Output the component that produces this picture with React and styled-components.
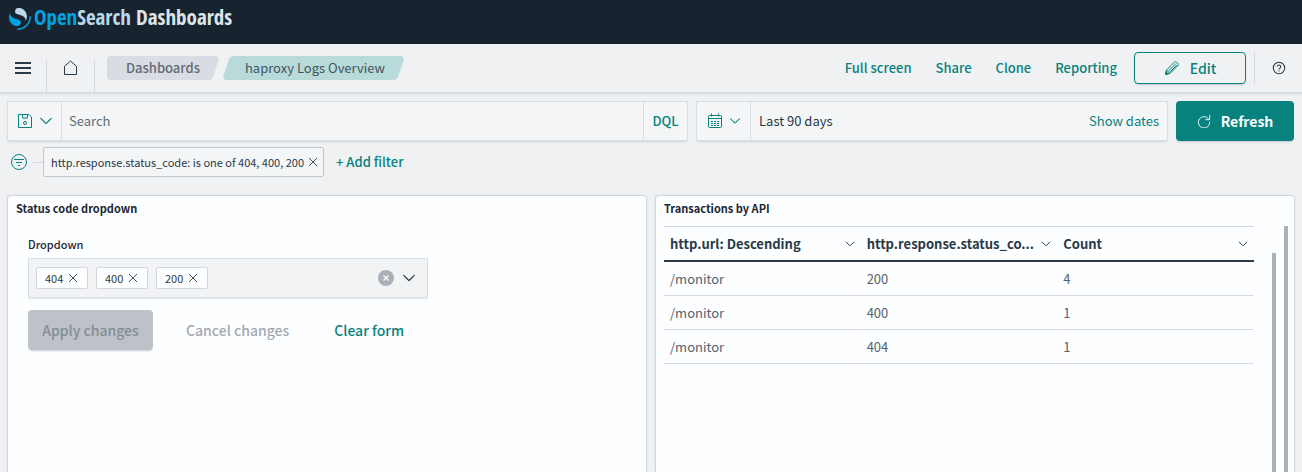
import React from "react";
import styled, { createGlobalStyle, css } from "styled-components";

const teal = "#07827e";
const ink = "#2a3947";
const border = "#d3d7dd";
const panelColor = "#fdfeff";

const GlobalStyle = createGlobalStyle`
  *, *::before, *::after { box-sizing: border-box; }
  body {
    margin: 0;
    background: #f0f1f3;
    color: ${ink};
    font-family: "Noto Sans CJK SC", "Noto Sans", sans-serif;
    font-size: 13px;
    line-height: 20px;
  }
  button, input { font: inherit; color: inherit; margin: 0; }
  a { text-decoration: none; }
  svg { flex: none; }
`;

const Page = styled.div`
  display: flex;
  flex-direction: column;
  height: 100vh;
  overflow: hidden;
`;

const TopBar = styled.header`
  display: flex;
  align-items: flex-start;
  height: 44px;
  padding: 4px 9px;
  background: #172430;
  flex: none;
`;

const Brand = styled.a`
  display: flex;
  align-items: flex-end;
  gap: 3px;
`;

const Wordmark = styled.span`
  font-family: "Open Sans Condensed", "Noto Sans Condensed", "Liberation Sans Narrow", "Open Sans", sans-serif;
  font-weight: 700;
  font-size: 21px;
  line-height: 26px;
  color: #dfe5e6;
  white-space: nowrap;
`;

const BrandPart = styled.span`
  color: ${(p) => (p.$light ? "#b9d9eb" : "#00a3e0")};
`;

const NavBar = styled.nav`
  display: flex;
  align-items: center;
  height: 49px;
  flex: none;
  border-bottom: 1px solid ${border};
  box-shadow: 0 1px 3px rgba(100, 110, 130, 0.2);
`;

const IconButton = styled.button`
  display: flex;
  align-items: center;
  justify-content: center;
  width: ${(p) => p.$width || 47}px;
  height: 32px;
  padding: 0;
  border: 0;
  background: none;
  color: ${(p) => (p.$accent ? teal : ink)};
`;

const Divider = styled.span`
  align-self: flex-end;
  width: 1px;
  height: 32px;
  background: ${border};
`;

const Crumbs = styled.div`
  display: flex;
  gap: 10px;
  margin-left: 12px;
`;

const Crumb = styled.a`
  position: relative;
  isolation: isolate;
  height: 24px;
  padding: 0 16px 0 19px;
  line-height: 24px;
  font-weight: ${(p) => (p.$current ? 400 : 500)};
  color: ${(p) => (p.$current ? "#3f5560" : "#5f6b76")};
  white-space: nowrap;

  &::before {
    content: "";
    position: absolute;
    inset: 0;
    z-index: -1;
    border-radius: 4px;
    background: ${(p) => (p.$current ? "#b8dbda" : "#d9dce2")};
    transform: skewX(-18deg);
  }

  ${(p) =>
    !p.$current &&
    css`
      &::after {
        content: "";
        position: absolute;
        inset: 0 50% 0 0;
        z-index: -1;
        border-radius: 4px 0 0 4px;
        background: #d9dce2;
      }
      &::before {
        left: 20%;
      }
    `}
`;

const NavActions = styled.div`
  display: flex;
  align-items: center;
  margin-left: auto;
`;

const TextButton = styled.button`
  height: ${(p) => (p.$large ? 40 : 30)}px;
  padding: 0 12px;
  border: 0;
  background: none;
  color: ${teal};
  font-weight: 500;
  font-size: ${(p) => (p.$large ? 14 : 13)}px;
  white-space: nowrap;

  &:disabled { color: #a3a9b0; }
`;

const SolidButton = styled.button`
  display: flex;
  align-items: center;
  justify-content: center;
  gap: 10px;
  height: ${(p) => (p.$outline ? 32 : 40)}px;
  width: ${(p) => p.$width}px;
  padding: 0;
  border: ${(p) => (p.$outline ? `1px solid ${teal}` : "0")};
  border-radius: 4px;
  background: ${(p) => (p.$outline ? "none" : teal)};
  color: ${(p) => (p.$outline ? teal : "#ffffff")};
  font-weight: ${(p) => (p.$strong ? 700 : 500)};
  font-size: 14px;
  white-space: nowrap;
  box-shadow: 0 2px 2px -1px rgba(80, 90, 100, 0.3);

  &:disabled { background: #bdc2c9; color: #858c93; }
`;

const EditButton = styled(SolidButton)`
  margin: 0 8px 0 5px;
`;

const QueryRow = styled.div`
  display: flex;
  gap: 8px;
  padding: 8px 8px 0 7px;
`;

const Group = styled.div`
  display: flex;
  height: 40px;
  border: 1px solid #d8dfe2;
  background: #f3f5f6;
  box-shadow: 0 2px 2px -1px rgba(80, 90, 110, 0.2);
  flex: ${(p) => (p.$grow ? "1" : "0 1 472px")};
  min-width: 0;
`;

const GroupButton = styled.button`
  display: flex;
  align-items: center;
  justify-content: center;
  gap: 6px;
  flex: none;
  width: ${(p) => p.$width}px;
  padding: 0;
  border: 0 solid #d8dfe2;
  border-right-width: ${(p) => (p.$end ? 0 : 1)}px;
  border-left-width: ${(p) => (p.$end ? 1 : 0)}px;
  background: none;
  color: ${teal};
  font-weight: 500;
`;

const SearchInput = styled.input`
  flex: 1;
  min-width: 0;
  padding: 0 7px;
  border: 0;
  outline: 0;
  background: none;

  &::placeholder { color: #5f6b76; opacity: 1; }
`;

const DateValue = styled.button`
  flex: 1;
  padding: 0 8px;
  border: 0;
  background: none;
  text-align: left;
`;

const ShowDates = styled.button`
  padding: 0 8px;
  border: 0;
  background: none;
  color: ${teal};
`;

const FilterRow = styled.div`
  display: flex;
  align-items: center;
  height: 36px;
  flex: none;
  padding: 6px 8px 0;
`;

const FilterLine = styled.span`
  width: 10px;
  height: 1px;
  margin-left: 3px;
  background: ${border};
`;

const FilterPill = styled.div`
  display: flex;
  align-items: center;
  gap: 4px;
  height: 30px;
  padding: 0 5px 0 7px;
  border: 1px solid #c3c7cd;
  border-radius: 2px;
  background: #f4f5f6;
  font-size: 11px;
  white-space: nowrap;
`;

const PillRemove = styled.button`
  display: flex;
  padding: 0;
  border: 0;
  background: none;
`;

const Panels = styled.main`
  display: grid;
  grid-template-columns: 1fr 1fr;
  gap: 8px;
  flex: 1;
  min-height: 0;
  padding: 18px 7px 0;
`;

const Panel = styled.section`
  display: flex;
  flex-direction: column;
  min-width: 0;
  border: 1px solid ${border};
  border-bottom: 0;
  border-radius: 4px 4px 0 0;
  background: ${panelColor};
  box-shadow: 0 0 2px rgba(80, 90, 110, 0.15);
`;

const PanelTitle = styled.h2`
  margin: 0;
  padding: 2px 8px 0;
  font-size: 11px;
  line-height: 20px;
  font-weight: 700;
  color: #1b2733;
`;

const ControlForm = styled.form`
  padding: 16px 20px;
`;

const FieldLabel = styled.label`
  display: block;
  margin-bottom: 4px;
  font-size: 11px;
  line-height: 20px;
  font-weight: 500;
  color: #1b2733;
`;

const ComboBox = styled.div`
  display: flex;
  align-items: center;
  gap: 8px;
  max-width: 400px;
  height: 40px;
  padding: 0 11px 0 7px;
  border: 1px solid #d8dfe2;
  background: #f2f3f5;
  box-shadow: 0 2px 2px -1px rgba(80, 90, 110, 0.15);
`;

const Chip = styled.span`
  display: flex;
  align-items: center;
  gap: 5px;
  width: 52px;
  height: 22px;
  padding: 0 8px;
  border: 1px solid ${border};
  border-radius: 2px;
  background: ${panelColor};
  font-size: 11px;
`;

const ComboInput = styled.input`
  flex: 1;
  min-width: 0;
  padding: 0;
  border: 0;
  outline: 0;
  background: none;
`;

const FormActions = styled.div`
  display: flex;
  gap: 21px;
  margin-top: 12px;
`;

const TableArea = styled.div`
  display: flex;
  flex: 1;
  min-height: 0;
  padding: 8px 6px 0 8px;
`;

const Table = styled.table`
  flex: 1;
  align-self: flex-start;
  width: 100%;
  table-layout: fixed;
  border-collapse: separate;
  border-spacing: 0;
  border-top: 1px solid ${border};
`;

const HeadCell = styled.th`
  height: 35px;
  padding: 0 6px;
  border-bottom: 2px solid ${ink};
  text-align: left;
  font-weight: 700;
`;

const HeadContent = styled.div`
  display: flex;
  align-items: center;
  justify-content: space-between;
  gap: 6px;
`;

const HeadText = styled.span`
  white-space: nowrap;
`;

const Cell = styled.td`
  height: 34px;
  padding: 0 6px;
  border-right: 1px solid ${panelColor};
  border-bottom: 1px solid ${border};
  color: #56626d;
`;

const ScrollBar = styled.div`
  flex: none;
  width: 4px;
  margin-top: ${(p) => (p.$inner ? 27 : 0)}px;
  margin-left: ${(p) => (p.$inner ? 18 : 8)}px;
  background: #a9b2ba;
`;

function Icon({ size = 16, width = 1, children }) {
  return (
    <svg width={size} height={size} viewBox="0 0 16 16" fill="none" stroke="currentColor" strokeWidth={width} aria-hidden="true">
      {children}
    </svg>
  );
}

const Chevron = ({ size, width }) => (
  <Icon size={size} width={width}>
    <path d="M2 5l5.3 5.3a1 1 0 0 0 1.4 0L14 5" strokeLinecap="round" />
  </Icon>
);

const Cross = () => (
  <Icon size={10} width={1.4}>
    <path d="M2 2l12 12M14 2L2 14" strokeLinecap="round" />
  </Icon>
);

function Logo() {
  return (
    <svg width="22" height="22" viewBox="0 0 64 64" aria-hidden="true">
      <path fill="#00a3e0" d="M61.7 23.5a2.3 2.3 0 0 0-2.3 2.3c0 18.5-15 33.6-33.6 33.6a2.3 2.3 0 1 0 0 4.6C46.9 64 64 46.9 64 25.8a2.3 2.3 0 0 0-2.3-2.3z" />
      <path fill="#00a3e0" d="M3.9 14C1.7 17.600-.4 22.400 0 29.100c.9 13.900 13.400 24.400 25.300 23.300 4.600-.4 9.400-4.200 9-11.100-.2-3-1.700-4.700-4-6.100-2.300-1.300-5.200-2.100-8.500-3-4-1.100-8.600-2.400-12.100-5C5.400 24.100 2.600 20.500 3.900 14z" />
      <path fill="#b9d9eb" d="M48.100 38c2.200-3.600 4.300-8.400 3.900-15.100C51.100 9 38.600-1.500 26.700-.4c-4.600.4-9.400 4.200-9 11.100.2 3 1.700 4.700 4 6.100 2.300 1.300 5.200 2.100 8.500 3 4 1.100 8.600 2.400 12.100 5 4.300 3.100 7.100 6.700 5.800 13.200z" />
    </svg>
  );
}

const columns = [
  { label: "http.url: Descending" },
  { label: "http.response.status_co...", title: "http.response.status_code: Descending" },
  { label: "Count" },
];
const rows = [
  ["/monitor", "200", "4"],
  ["/monitor", "400", "1"],
  ["/monitor", "404", "1"],
];

export default function App() {
  return (
    <Page>
      <GlobalStyle />
      <TopBar>
        <Brand href="#">
          <Logo />
          <Wordmark>
            <BrandPart>Open</BrandPart>
            <BrandPart $light>Search</BrandPart> Dashboards
          </Wordmark>
        </Brand>
      </TopBar>

      <NavBar>
        <IconButton aria-label="Menu" $width={46}>
          <Icon width={2}><path d="M0 3h16M0 8h16M0 13h16" /></Icon>
        </IconButton>
        <Divider />
        <IconButton aria-label="Home">
          <Icon><path d="M1.500 14.500h12V6.300L7.500 1 1.500 6.300z" strokeLinejoin="round" /></Icon>
        </IconButton>
        <Divider />
        <Crumbs>
          <Crumb href="#">Dashboards</Crumb>
          <Crumb href="#" $current>haproxy Logs Overview</Crumb>
        </Crumbs>
        <NavActions>
          <TextButton>Full screen</TextButton>
          <TextButton>Share</TextButton>
          <TextButton>Clone</TextButton>
          <TextButton>Reporting</TextButton>
          <EditButton $outline $width={112}>
            <Icon>
              <path d="M1.500 14.500l1-4.500 8-8a1.500 1.500 0 0 1 2 0l1.500 1.500a1.500 1.500 0 0 1 0 2l-8 8zM2.500 10l3.500 3.500M4 11.500l8-8M5.500 12.500l7.500-7.500" strokeLinejoin="round" />
              <path d="M1.500 14.500l.6-2.800 2.200 2.200z" fill="currentColor" />
            </Icon>
            Edit
          </EditButton>
          <Divider />
          <IconButton aria-label="Help">
            <Icon size={14} width={1.2}>
              <circle cx="8" cy="8" r="6.500" />
              <path d="M6 6.500a2 2 0 1 1 2.800 1.900c-.6.3-.8.600-.8 1.300M8 10.800v1.300" />
            </Icon>
          </IconButton>
        </NavActions>
      </NavBar>

      <QueryRow>
        <Group $grow>
          <GroupButton aria-label="Saved queries" $width={54}>
            <Icon>
              <path d="M1.500 1.500h10.500l2.500 2.500v10.500h-13zM5.500 1.500v3.500h5V1.500" strokeLinejoin="round" />
              <circle cx="8" cy="10" r="1.500" />
            </Icon>
            <Chevron size={14} width={1.3} />
          </GroupButton>
          <SearchInput aria-label="Search" placeholder="Search" />
          <GroupButton $end $width={44}>DQL</GroupButton>
        </Group>
        <Group>
          <GroupButton aria-label="Date quick select" $width={54}>
            <Icon>
              <path d="M2.500 2.500h11a1 1 0 0 1 1 1v10a1 1 0 0 1-1 1h-11a1 1 0 0 1-1-1v-10a1 1 0 0 1 1-1zM1.500 5.500h13M4.500 0.500v3M11.500 0.500v3" />
              <path d="M4 8.500h8M4 10.500h8M4 12.500h8" strokeDasharray="2 1" />
            </Icon>
            <Chevron size={12} width={1.4} />
          </GroupButton>
          <DateValue>Last 90 days</DateValue>
          <ShowDates>Show dates</ShowDates>
        </Group>
        <SolidButton $strong $width={118}>
          <Icon size={14}>
            <path d="M13.500 6A6.500 6.500 0 1 0 14.500 9M14.500 1v5.500H9.500" />
          </Icon>
          Refresh
        </SolidButton>
      </QueryRow>

      <FilterRow>
        <IconButton aria-label="Filter options" $accent $width={22}>
          <Icon>
            <circle cx="8" cy="8" r="7.500" />
            <path d="M3 5.500h10M5 8.500h6M7 11.500h2" />
          </Icon>
        </IconButton>
        <FilterLine />
        <FilterPill>
          http.response.status_code: is one of 404, 400, 200
          <PillRemove aria-label="Remove filter"><Cross /></PillRemove>
        </FilterPill>
        <TextButton>+ Add filter</TextButton>
      </FilterRow>

      <Panels>
        <Panel>
          <PanelTitle>Status code dropdown</PanelTitle>
          <ControlForm onSubmit={(e) => e.preventDefault()}>
            <FieldLabel htmlFor="status-code">Dropdown</FieldLabel>
            <ComboBox>
              {["404", "400", "200"].map((code) => (
                <Chip key={code}>
                  {code}
                  <PillRemove type="button" aria-label={`Remove ${code}`}><Cross /></PillRemove>
                </Chip>
              ))}
              <ComboInput id="status-code" />
              <PillRemove type="button" aria-label="Clear selection">
                <svg width="16" height="16" viewBox="0 0 16 16" aria-hidden="true">
                  <circle cx="8" cy="8" r="8" fill="#a9b0b8" />
                  <path d="M5.500 5.500l5 5M10.500 5.500l-5 5" stroke="#fff" strokeWidth="1.400" />
                </svg>
              </PillRemove>
              <PillRemove type="button" aria-label="Open list"><Chevron size={14} width={1.4} /></PillRemove>
            </ComboBox>
            <FormActions>
              <SolidButton disabled $width={125}>Apply changes</SolidButton>
              <TextButton type="button" $large disabled>Cancel changes</TextButton>
              <TextButton type="button" $large>Clear form</TextButton>
            </FormActions>
          </ControlForm>
        </Panel>

        <Panel>
          <PanelTitle>Transactions by API</PanelTitle>
          <TableArea>
            <Table>
              <thead>
                <tr>
                  {columns.map(({ label, title }) => (
                    <HeadCell key={label} title={title}>
                      <HeadContent>
                        <HeadText>{label}</HeadText>
                        <Chevron size={10} width={1.6} />
                      </HeadContent>
                    </HeadCell>
                  ))}
                </tr>
              </thead>
              <tbody>
                {rows.map((row) => (
                  <tr key={row[1]}>
                    {row.map((value, i) => (
                      <Cell key={i}>{value}</Cell>
                    ))}
                  </tr>
                ))}
              </tbody>
            </Table>
            <ScrollBar $inner />
            <ScrollBar />
          </TableArea>
        </Panel>
      </Panels>
    </Page>
  );
}
